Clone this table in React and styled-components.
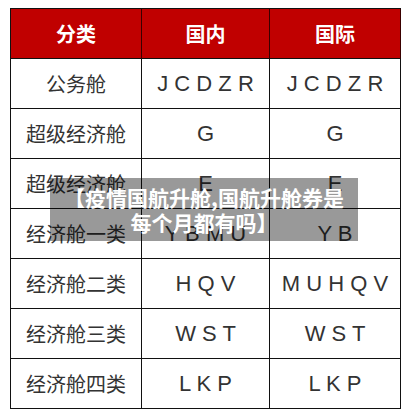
import React from "react";
import styled, { createGlobalStyle } from "styled-components";

const Global = createGlobalStyle`
  html, body { margin: 0; padding: 0; background: #fff; }
  body { font-family: "Liberation Sans", "Noto Sans CJK SC", sans-serif; }
`;

const Page = styled.div`
  position: relative;
  width: 410px;
  height: 420px;
  padding: 8px 0 0 10px;
  box-sizing: border-box;
`;

const Table = styled.div`
  display: grid;
  grid-template-columns: 131px 128px 131px;
  grid-auto-rows: 50px;
  width: max-content;
  border-left: 1px solid #111;
  border-top: 1px solid #111;
`;

const Cell = styled.div`
  display: flex;
  align-items: center;
  justify-content: center;
  box-sizing: border-box;
  border-right: 1px solid ${(p) => (p.$head ? "#3a0000" : "#111")};
  border-bottom: 1px solid #111;
  background: ${(p) => (p.$head ? "#c00000" : "#fff")};
  color: ${(p) => (p.$head ? "#fff" : "#333")};
  font-family: ${(p) =>
    p.$latin
      ? '"Liberation Sans", Arial, sans-serif'
      : '"Noto Sans CJK SC", sans-serif'};
  font-size: ${(p) => (p.$latin ? "22px" : "20px")};
  font-weight: ${(p) => (p.$head ? 700 : 400)};
  white-space: pre;
`;

const Caption = styled.div`
  position: absolute;
  left: 50px;
  top: 178px;
  width: 308px;
  height: 63px;
  box-sizing: border-box;
  background: rgba(0, 0, 0, 0.4);
  display: flex;
  flex-direction: column;
  align-items: center;
  justify-content: center;
  color: #fff;
  font-family: "Noto Sans CJK SC", sans-serif;
  font-weight: 700;
  font-size: 21px;
  line-height: 25px;
  text-align: center;
`;

const rows = [
  ["公务舱", "J C D Z R", "J C D Z R"],
  ["超级经济舱", "G", "G"],
  ["超级经济舱", "E", "E"],
  ["经济舱一类", "Y B M U", "Y B"],
  ["经济舱二类", "H Q V", "M U H Q V"],
  ["经济舱三类", "W S T", "W S T"],
  ["经济舱四类", "L K P", "L K P"],
];

export default function App() {
  return (
    <>
      <Global />
      <Page>
        <Table>
          <Cell $head>分类</Cell>
          <Cell $head>国内</Cell>
          <Cell $head>国际</Cell>
          {rows.map((r, i) => (
            <React.Fragment key={i}>
              <Cell>{r[0]}</Cell>
              <Cell $latin>{r[1]}</Cell>
              <Cell $latin>{r[2]}</Cell>
            </React.Fragment>
          ))}
        </Table>
        <Caption>
          <span>【疫情国航升舱,国航升舱券是</span>
          <span>每个月都有吗】</span>
        </Caption>
      </Page>
    </>
  );
}
